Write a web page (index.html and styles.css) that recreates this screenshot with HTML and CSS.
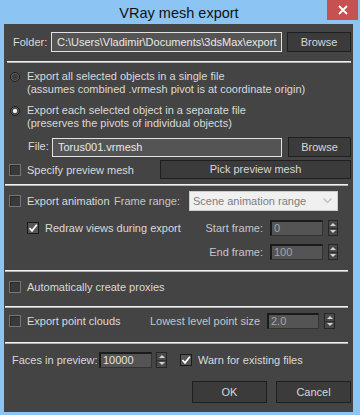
FILE: index.html
```html
<!DOCTYPE html>
<html lang="en">
<head>
  <meta charset="UTF-8" />
  <meta name="viewport" content="width=device-width, initial-scale=1.0" />
  <title>VRay mesh export</title>
  <link rel="stylesheet" href="styles.css">
</head>
<body>
  <div class="window">

    <!-- Title bar -->
    <div class="titlebar">
      <span class="title">VRay mesh export</span>
      <span class="close">
        <svg width="10" height="10" viewBox="0 0 10 10"><path d="M1 1L9 9M9 1L1 9" stroke="#fff" stroke-width="1.8" fill="none"/></svg>
      </span>
    </div>

    <div class="client">

      <!-- Output folder -->
      <div class="row folder-row">
        <span class="folder-label">Folder:</span>
        <div class="path-field folder-path">C:\Users\Vladimir\Documents\3dsMax\export</div>
        <div class="button browse">Browse</div>
      </div>

      <div class="separator first"></div>

      <!-- Export mode -->
      <div class="option first-option">
        <span class="radio"></span>
        <span>Export all selected objects in a single file<br>(assumes combined .vrmesh pivot is at coordinate origin)</span>
      </div>
      <div class="option second-option">
        <span class="radio selected"></span>
        <span>Export each selected object in a separate file<br>(preserves the pivots of individual objects)</span>
      </div>

      <div class="row file-row">
        <span class="file-label">File:</span>
        <div class="path-field file-path">Torus001.vrmesh</div>
        <div class="button browse file-browse">Browse</div>
      </div>

      <div class="row preview-row">
        <span class="checkbox"></span>
        <span class="check-label">Specify preview mesh</span>
        <div class="button pick">Pick preview mesh</div>
      </div>

      <div class="separator"></div>

      <!-- Animation -->
      <div class="row anim-row">
        <span class="checkbox"></span>
        <span class="check-label anim-label">Export animation</span>
        <span class="range-label dim">Frame range:</span>
        <div class="dropdown">
          <span>Scene animation range</span>
          <svg width="9" height="6" viewBox="0 0 9 6"><path d="M0.5 0.5L4.5 4.5L8.5 0.5" stroke="#bcbcbc" stroke-width="1.2" fill="none"/></svg>
        </div>
      </div>

      <div class="row frame-row start-row">
        <div class="redraw">
          <span class="checkbox checked">
            <svg width="10" height="10" viewBox="0 0 10 10"><path d="M1.5 5L4 7.8L8.8 1.8" stroke="#fff" stroke-width="1.8" fill="none"/></svg>
          </span>
          <span class="check-label">Redraw views during export</span>
        </div>
        <span class="frame-label dim">Start frame:</span>
        <div class="spin-field frame-field dim-value">0</div>
        <div class="spinner"><span class="half"><i class="up"></i></span><span class="half"><i class="down"></i></span></div>
      </div>

      <div class="row frame-row end-row">
        <div class="redraw"></div>
        <span class="frame-label dim">End frame:</span>
        <div class="spin-field frame-field dim-value">100</div>
        <div class="spinner"><span class="half"><i class="up"></i></span><span class="half"><i class="down"></i></span></div>
      </div>

      <div class="separator anim-end"></div>

      <!-- Proxies -->
      <div class="row proxies-row">
        <span class="checkbox"></span>
        <span class="check-label">Automatically create proxies</span>
      </div>

      <div class="separator proxies-end"></div>

      <!-- Point clouds -->
      <div class="row clouds-row">
        <span class="checkbox"></span>
        <span class="check-label">Export point clouds</span>
        <span class="size-label dim">Lowest level point size</span>
        <div class="spin-field size-field dim-value">2.0</div>
        <div class="spinner wide"><span class="half"><i class="up"></i></span><span class="half"><i class="down"></i></span></div>
      </div>

      <div class="separator clouds-end"></div>

      <!-- Preview faces and warning -->
      <div class="row faces-row">
        <span class="faces-label">Faces in preview:</span>
        <div class="spin-field faces-field">10000</div>
        <div class="spinner wide"><span class="half"><i class="up"></i></span><span class="half"><i class="down"></i></span></div>
        <span class="checkbox checked warn-box">
          <svg width="10" height="10" viewBox="0 0 10 10"><path d="M1.5 5L4 7.8L8.8 1.8" stroke="#fff" stroke-width="1.8" fill="none"/></svg>
        </span>
        <span class="check-label">Warn for existing files</span>
      </div>

      <div class="row buttons-row">
        <div class="button dialog-button">OK</div>
        <div class="button dialog-button cancel">Cancel</div>
      </div>

    </div>
  </div>
</body>
</html>
```

FILE: styles.css
```css
body {
  margin: 0;
  width: 360px;
  height: 415px;
  overflow: hidden;
  background: #8cc4f4; /* window frame */
  font-family: 'Liberation Sans', Arial, sans-serif;
  font-size: 11px;
  color: #dadada;
}
.window {
  display: flex;
  flex-direction: column;
}
/* Title bar */
.titlebar {
  display: flex;
  height: 24px;
}
.title {
  flex: 1;
  text-align: center;
  padding-left: 31px;
  padding-top: 2px;
  line-height: 22px;
  font-size: 14.5px;
  color: #111;
}
.close {
  width: 31px;
  height: 20px;
  margin-right: 2px;
  background: #c75050;
  display: flex;
  align-items: center;
  justify-content: center;
}
/* Dialog body */
.client {
  margin-left: 4px;
  width: 349px;
  height: 388px;
  background: #444444;
  display: flex;
  flex-direction: column;
}
.row {
  display: flex;
  align-items: center;
  white-space: nowrap;
}
.separator {
  height: 2px;
  box-sizing: border-box;
  border-top: 1px solid #f0f0f0;
  border-bottom: 1px solid #b4b4b4;
  margin: 5px 5px 0 1px;
}
.separator.first {
  margin: 9px 2px 0 3px;
}
.separator.anim-end {
  margin-top: 10px;
}
.separator.proxies-end {
  margin-top: 12px;
}
.separator.clouds-end {
  margin-top: 13px;
}
.dim {
  color: #c6c6c6;
}
/* Text fields */
.path-field {
  height: 20px;
  box-sizing: border-box;
  border: 1px solid #e2e2e2;
  background: #545454;
  color: #e8e8e8;
  padding-left: 5px;
  line-height: 18px;
  overflow: hidden;
}
.spin-field {
  height: 16px;
  box-sizing: border-box;
  background: #545454;
  border-top: 2px solid #1b1b1b;
  border-left: 2px solid #1b1b1b;
  border-right: 1px solid #333;
  border-bottom: 1px solid #333;
  padding-left: 2px;
  line-height: 13px;
  color: #e4e4e4;
}
.spin-field.dim-value {
  color: #a4a4a4;
}
.spinner {
  width: 10px;
  height: 16px;
  margin-left: 5px;
  box-sizing: border-box;
  border: 1px solid #262626;
  background: #4a4a4a;
  display: flex;
  flex-direction: column;
}
.spinner.wide {
  width: 11px;
}
.spinner .half {
  flex: 1;
  display: flex;
  align-items: center;
  justify-content: center;
}
.spinner .half:first-child {
  border-bottom: 1px solid #2e2e2e;
}
.up {
  width: 0;
  height: 0;
  border-left: 3px solid transparent;
  border-right: 3px solid transparent;
  border-bottom: 3px solid #d4d4d4;
}
.down {
  width: 0;
  height: 0;
  border-left: 3px solid transparent;
  border-right: 3px solid transparent;
  border-top: 3px solid #d4d4d4;
}
/* Buttons */
.button {
  height: 20px;
  box-sizing: border-box;
  border: 1px solid #1f1f1f;
  background: #3b3b3b;
  color: #d8d8d8;
  text-align: center;
  line-height: 18px;
}
.browse {
  width: 64px;
  margin-left: 5px;
}
/* Check boxes and radios */
.checkbox {
  width: 12px;
  height: 12px;
  box-sizing: border-box;
  flex: none;
  border: 1px solid #767676;
  background: #3a3a3a;
  box-shadow: inset 1px 1px 0 #2a2a2a;
  display: flex;
  align-items: center;
  justify-content: center;
}
.checkbox.checked {
  border: 1px solid #1a1a1a;
  background: #565656;
  box-shadow: none;
}
.check-label {
  margin-left: 6px;
}
.radio {
  width: 10px;
  height: 10px;
  flex: none;
  box-sizing: border-box;
  border-radius: 50%;
  border: 1px solid #1e1e1e;
  background: radial-gradient(circle, #3c3c3c 0 2.5px, #5c5c5c 3.5px);
  margin: 2px 7px 0 0;
}
.radio.selected {
  background: radial-gradient(circle, #f0f0f0 0 1.8px, #3c3c3c 2.6px 2.8px, #5c5c5c 3.6px);
}
/* Folder row */
.folder-row {
  height: 20px;
  margin-top: 8px;
  padding-left: 9px;
}
.folder-label {
  width: 38px;
}
.folder-path {
  width: 231px;
}
/* Export mode options */
.option {
  display: flex;
  padding-left: 6px;
  line-height: 13px;
}
.first-option {
  margin-top: 7px;
}
.second-option {
  margin-top: 8px;
}
.file-row {
  height: 20px;
  margin-top: 7px;
  padding-left: 24px;
}
.file-label {
  width: 24px;
  margin-top: -3px;
}
.file-path {
  width: 230px;
  height: 19px;
  line-height: 17px;
}
.file-browse {
  width: 63px;
  margin-left: 6px;
}
.preview-row {
  height: 19px;
  margin-top: 3px;
  padding-left: 5px;
}
.pick {
  width: 191px;
  height: 19px;
  margin-left: auto;
  margin-right: 2px;
  line-height: 17px;
}
/* Animation */
.anim-row {
  height: 20px;
  margin-top: 5px;
  padding-left: 5px;
}
.anim-label {
  width: 87px;
}
.range-label {
  width: 75px;
}
.dropdown {
  width: 149px;
  height: 20px;
  box-sizing: border-box;
  border: 1px solid #cdcdcd;
  background: #f0f0f0;
  color: #7d7d7d;
  padding: 0 5px 0 3px;
  display: flex;
  align-items: center;
  justify-content: space-between;
}
.frame-row {
  height: 16px;
  padding-left: 23px;
  padding-right: 15px;
}
.start-row {
  margin-top: 9px;
}
.end-row {
  margin-top: 8px;
}
.redraw {
  flex: 1;
  display: flex;
  align-items: center;
}
.frame-label {
  width: 69px;
  margin-right: 7px;
  text-align: right;
}
.frame-field {
  width: 53px;
}
/* Proxies */
.proxies-row {
  height: 14px;
  margin-top: 8px;
  padding-left: 5px;
}
/* Point clouds */
.clouds-row {
  height: 16px;
  margin-top: 5px;
  padding-left: 5px;
  padding-right: 18px;
}
.size-label {
  flex: 1;
  text-align: right;
  padding-right: 7px;
}
.size-field {
  width: 52px;
}
/* Faces and warning */
.faces-row {
  height: 16px;
  margin-top: 8px;
  padding-left: 8px;
}
.faces-label {
  width: 87px;
}
.faces-field {
  width: 53px;
}
.faces-row .spinner {
  margin-left: 4px;
}
.warn-box {
  margin-left: 13px;
}
/* Dialog buttons */
.buttons-row {
  height: 22px;
  margin-top: 13px;
  padding-right: 2px;
  justify-content: flex-end;
}
.dialog-button {
  width: 75px;
  height: 22px;
  line-height: 20px;
}
.cancel {
  margin-left: 9px;
}
```
